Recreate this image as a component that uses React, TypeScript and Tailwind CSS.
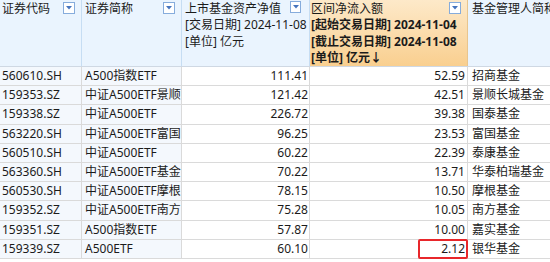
const rows = [
  { code: "560610.SH", name: "A500指数ETF", nav: "111.41", flow: "52.59", mgr: "招商基金" },
  { code: "159353.SZ", name: "中证A500ETF景顺", nav: "121.42", flow: "42.51", mgr: "景顺长城基金" },
  { code: "159338.SZ", name: "中证A500ETF", nav: "226.72", flow: "39.38", mgr: "国泰基金" },
  { code: "563220.SH", name: "中证A500ETF富国", nav: "96.25", flow: "23.53", mgr: "富国基金" },
  { code: "560510.SH", name: "中证A500ETF", nav: "60.22", flow: "22.39", mgr: "泰康基金" },
  { code: "563360.SH", name: "中证A500ETF基金", nav: "70.22", flow: "13.71", mgr: "华泰柏瑞基金" },
  { code: "560530.SH", name: "中证A500ETF摩根", nav: "78.15", flow: "10.50", mgr: "摩根基金" },
  { code: "159352.SZ", name: "中证A500ETF南方", nav: "75.28", flow: "10.05", mgr: "南方基金" },
  { code: "159351.SZ", name: "A500指数ETF", nav: "57.87", flow: "10.00", mgr: "嘉实基金" },
  { code: "159339.SZ", name: "A500ETF", nav: "60.10", flow: "2.12", mgr: "银华基金" },
];

function FilterButton() {
  return (
    <span className="absolute right-[6px] top-[2px] flex h-[12px] w-[12px] items-center justify-center border border-[#86acdc] bg-white">
      <svg width="6" height="4" viewBox="0 0 6 4">
        <path d="M0 0 L6 0 L3 3.5 Z" fill="#4674bd" />
      </svg>
    </span>
  );
}

export default function App() {
  return (
    <div className="h-[262px] w-[550px] overflow-hidden bg-white font-['Noto_Sans','Noto_Sans_CJK_SC',sans-serif] text-[12px] text-[#1b1b1b]">
      {/* header */}
      <div className="flex h-[67px] border-b border-[#cfd8e3] bg-[#eaf4fe] leading-[16.4px]">
        <div className="relative w-[82px] shrink-0 border-r border-[#c6ddf3] pl-[2px] pt-px">
          证券代码
          <FilterButton />
        </div>
        <div className="relative w-[100px] shrink-0 border-r border-[#c6ddf3] pl-[3px] pt-px">
          证券简称
          <FilterButton />
        </div>
        <div className="relative w-[128px] shrink-0 border-r border-[#c6ddf3] pl-[3px] pt-px whitespace-nowrap">
          <div>上市基金资产净值</div>
          <div>[交易日期] 2024-11-08</div>
          <div>[单位] 亿元</div>
          <span className="absolute right-[8px] top-px flex h-[12px] w-[11px] items-center justify-center border border-[#86acdc] bg-white">
            <svg width="6" height="4" viewBox="0 0 6 4">
              <path d="M0 0 L6 0 L3 3.5 Z" fill="#4674bd" />
            </svg>
          </span>
        </div>
        <div className="relative w-[158px] shrink-0 border-r border-[#e8c58e] bg-gradient-to-b from-[#fde9c9] to-[#f9cf8f] pl-[1px] pt-px whitespace-nowrap">
          <div>区间净流入额</div>
          <div className="font-bold">[起始交易日期] 2024-11-04</div>
          <div className="font-bold">[截止交易日期] 2024-11-08</div>
          <div className="font-bold">[单位] 亿元↓</div>
          <FilterButton />
        </div>
        <div className="flex-1 whitespace-nowrap pl-[4px] pt-px">基金管理人简称</div>
      </div>

      {/* body */}
      {rows.map((r, i) => (
        <div key={r.code} className="flex h-[19.2px] border-b border-[#dadada] leading-[18px]">
          <div className="flex w-[82px] shrink-0 items-center border-r border-[#dadada] bg-[#f4f8fd] pl-[2px]">
            {r.code}
          </div>
          <div className="flex w-[100px] shrink-0 items-center whitespace-nowrap border-r border-[#dadada] bg-[#f4f8fd] pl-[3px]">
            {r.name}
          </div>
          <div className="flex w-[128px] shrink-0 items-center justify-end border-r border-[#dadada] pr-[1px]">
            {r.nav}
          </div>
          <div className="relative flex w-[158px] shrink-0 items-center justify-end border-r border-[#dadada] pr-[2px]">
            {r.flow}
            {i === rows.length - 1 && (
              <span className="absolute right-[-1px] top-[-1px] h-[20px] w-[50px] rounded-[2px] border-2 border-[#e8272b]" />
            )}
          </div>
          <div className="flex flex-1 items-center whitespace-nowrap pl-[4px]">{r.mgr}</div>
        </div>
      ))}
    </div>
  );
}
